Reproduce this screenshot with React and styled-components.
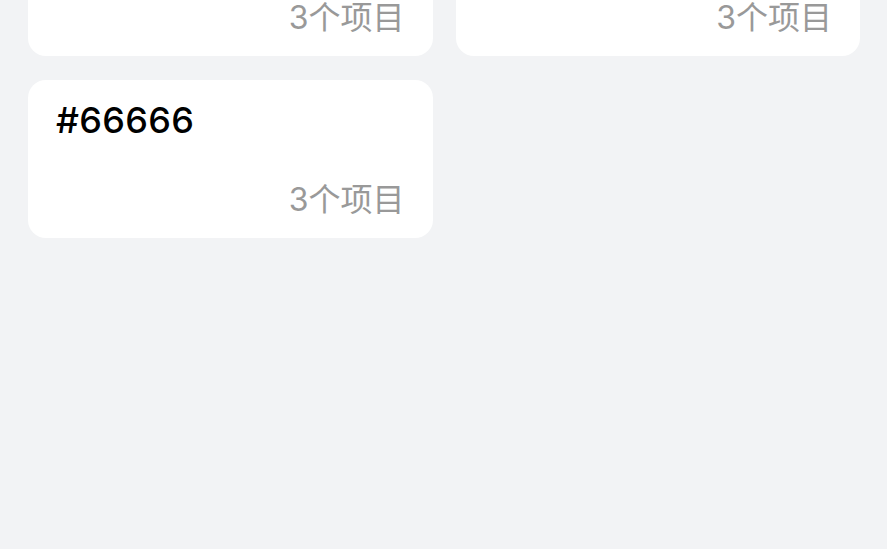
import React, { useLayoutEffect, useRef } from "react";
import styled, { createGlobalStyle } from "styled-components";

const Global = createGlobalStyle`
  html, body { margin: 0; padding: 0; background: #f2f3f5; }
  body { font-family: Inter, "Noto Sans CJK SC", sans-serif; }
`;

const Page = styled.div`
  height: 100vh;
  overflow-y: auto;
  background: #f2f3f5;
  scrollbar-width: none;
  &::-webkit-scrollbar { display: none; }
`;

const Grid = styled.div`
  display: grid;
  grid-template-columns: 1fr 1fr;
  column-gap: 23px;
  row-gap: 24px;
  padding: 24px 27px 600px 28px;
`;

const Card = styled.div`
  background: #ffffff;
  border-radius: 18px;
  padding: 22px 28px 22px 28px;
  display: flex;
  flex-direction: column;
  height: 158px;
  box-sizing: border-box;
`;

const Title = styled.div`
  font-family: Inter, "Noto Sans CJK SC", sans-serif;
  font-size: 36px;
  line-height: 36px;
  font-weight: 500;
  color: #000;
  letter-spacing: 0.3px;
`;

const Count = styled.div`
  margin-top: auto;
  font-family: Inter, "Noto Sans CJK SC", sans-serif;
  font-size: 32px;
  line-height: 32px;
  color: #999999;
  text-align: right;
`;

const groups = [
  { name: "#33333", count: 3 },
  { name: "#55555", count: 3 },
  { name: "#66666", count: 3 },
];

export default function App() {
  const ref = useRef(null);
  useLayoutEffect(() => {
    if (ref.current) ref.current.scrollTop = 126;
  }, []);
  return (
    <>
      <Global />
      <Page ref={ref}>
        <Grid>
          {groups.map((g) => (
            <Card key={g.name}>
              <Title>{g.name}</Title>
              <Count>{g.count}个项目</Count>
            </Card>
          ))}
        </Grid>
      </Page>
    </>
  );
}
